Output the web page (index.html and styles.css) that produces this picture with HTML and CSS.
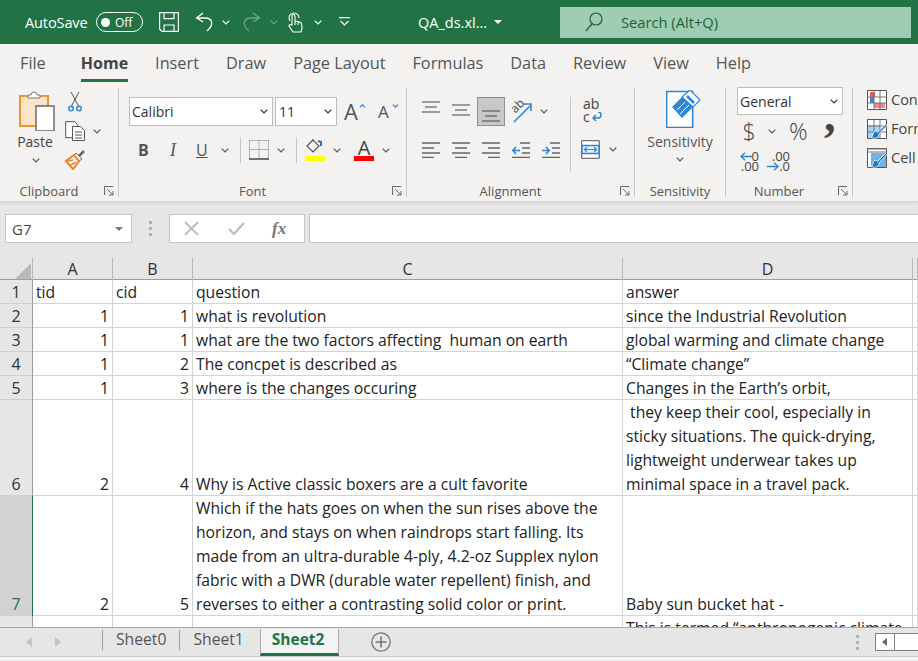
FILE: index.html
```html
<!DOCTYPE html>
<html lang="en">
<head>
    <meta charset="UTF-8">
    <title>QA_ds.xlsx - Excel</title>
    <link rel="stylesheet" href="styles.css">
</head>
<body>
    <svg class="sprite">
        <symbol id="chev" viewBox="0 0 8 5"><path d="M.7.7 4 4 7.3.7" fill="none" stroke="currentColor" stroke-width="1.2"/></symbol>
        <symbol id="launcher" viewBox="0 0 10 10"><path d="M.5 9V.5H9M3 3l6 6M9 5v4H5" fill="none" stroke="#666" stroke-width="1"/></symbol>
        <symbol id="lines" viewBox="0 0 18 12"><path d="M0 1h18M3 6h12M0 11h18" fill="none" stroke="#444" stroke-width="1.2"/></symbol>
        <symbol id="leftlines" viewBox="0 0 18 16"><path d="M0 1h18M0 6h12M0 11h18M0 15.500h12" fill="none" stroke="#666" stroke-width="1.4"/></symbol>
        <symbol id="midlines" viewBox="0 0 18 16"><path d="M0 1h18M3 6h12M0 11h18M3 15.500h12" fill="none" stroke="#666" stroke-width="1.4"/></symbol>
        <symbol id="rightlines" viewBox="0 0 18 16"><path d="M0 1h18M6 6h12M0 11h18M6 15.500h12" fill="none" stroke="#666" stroke-width="1.4"/></symbol>
        <symbol id="brush" viewBox="0 0 12 12"><path d="M11 1 5 7 3 6C1 7 2 10 0 11c4 1 6 0 6-3l1-1 5-5z" fill="#1e79c0" stroke="#fff" stroke-width=".6"/></symbol>
    </svg>

    <header class="titlebar">
        <span class="autosave">AutoSave</span>
        <span class="toggle"><i class="knob"></i>Off</span>
        <svg class="qa-save" width="20" height="20" viewBox="0 0 20 20" fill="none" stroke="#fff" stroke-width="1.200"><path d="M.6.6h18.800v18.800H3L.6 17zM5 .6v6h10v-6M5 19v-6h10v6"/></svg>
        <svg class="qa-undo" width="18" height="20" viewBox="0 0 18 20" fill="none" stroke="#fff" stroke-width="1.300"><path d="M8 1 1.500 6 8 10M2 6h8c8 0 9 7 2 13"/></svg>
        <svg class="qa-chev chev-small white"><use href="#chev"/></svg>
        <svg class="qa-redo" width="18" height="20" viewBox="0 0 18 20" fill="none" stroke="#6ba585" stroke-width="1.300"><path d="M10 1l6.500 5L10 10M16 6H8c-8 0-9 7-2 13"/></svg>
        <svg class="qa-chev chev-small dim"><use href="#chev"/></svg>
        <svg class="qa-touch" width="16" height="22" viewBox="0 0 16 22" fill="none" stroke="#fff" stroke-width="1.100"><path d="M3 10a6 6 0 0 1-1-3 5 5 0 0 1 10 0"/><path d="M5 14V5a1.500 1.500 0 0 1 3 0v5l5 1c2 1 2 4 2 6l-1 4H6l-4-6c0-1 1-2 3-1zM8 10v4M11 11v3"/></svg>
        <svg class="qa-chev2 chev-small white"><use href="#chev"/></svg>
        <svg class="qa-more" width="13" height="10" viewBox="0 0 13 10" fill="none" stroke="#fff" stroke-width="1.100"><path d="M1 .600h11M2.500 4 6.500 8l4-4"/></svg>
        <span class="filename">QA_ds.xl...</span>
        <svg class="caret" width="8" height="4" viewBox="0 0 8 4"><path d="M0 0h8L4 4z" fill="#fff"/></svg>
        <div class="search">
            <svg width="18" height="20" viewBox="0 0 18 20" fill="none" stroke="#1f5f3c" stroke-width="1.200"><circle cx="11" cy="7" r="6"/><path d="M7 12 .8 19"/></svg>
            <span>Search (Alt+Q)</span>
        </div>
    </header>

    <nav class="tabs">
        <a class="tab-file">File</a>
        <a class="tab-active">Home</a>
        <a>Insert</a>
        <a>Draw</a>
        <a>Page Layout</a>
        <a>Formulas</a>
        <a>Data</a>
        <a>Review</a>
        <a>View</a>
        <a>Help</a>
    </nav>

    <section class="ribbon">
        <div class="group clipboard">
            <div class="paste">
                <svg width="36" height="40" viewBox="0 0 36 40">
                    <path d="M1 5h28v30H1z" fill="#fbe6c8" stroke="#e8963a" stroke-width="2"/>
                    <path d="M9 7V4h3a3 3 0 0 1 6 0h3v3z" fill="#fff" stroke="#777"/>
                    <path d="M17 15h18v25H17z" fill="#fff" stroke="#666" stroke-width="1.400"/>
                </svg>
                <span>Paste</span>
                <svg class="chev-small"><use href="#chev"/></svg>
            </div>
            <div class="clip-tools">
                <svg width="14" height="20" viewBox="0 0 14 20" fill="none"><path d="M3.500 14 11 0M10.500 14 3 0" stroke="#555"/><circle cx="3" cy="16.500" r="2.300" stroke="#2b88d8" stroke-width="1.500"/><circle cx="11" cy="16.500" r="2.300" stroke="#2b88d8" stroke-width="1.500"/></svg>
                <div class="copy-row">
                    <svg width="20" height="20" viewBox="0 0 20 20" fill="#fff" stroke="#555"><path d="M.7.700h9l3 3v13H.7z"/><path d="M7.500 5.500h8l4 4v10H7.500zM10 11h7M10 14h7M10 17h7"/></svg>
                    <svg class="chev-small"><use href="#chev"/></svg>
                </div>
                <svg width="20" height="20" viewBox="0 0 20 20"><path d="M13 7 19 1" stroke="#666" stroke-width="2.500"/><path d="M11 3l6 6-3 2-5-5z" fill="#fff" stroke="#666"/><path d="M9 5 1 11l7 8 6-8z" fill="#fff" stroke="#e8862a" stroke-width="2"/><path d="M3 11l5-1M6 15l5-3" stroke="#e8862a" stroke-width="1.500"/></svg>
            </div>
            <span class="group-label">Clipboard</span>
            <svg class="launcher"><use href="#launcher"/></svg>
        </div>

        <div class="group font">
            <div class="font-row first">
                <div class="combo font-name">Calibri<svg class="chev-small dark"><use href="#chev"/></svg></div>
                <div class="combo font-size">11<svg class="chev-small dark"><use href="#chev"/></svg></div>
                <span class="grow-a big">A<svg width="7" height="4" viewBox="0 0 8 5"><path d="M.7 4.300 4 1l3.300 3.300" fill="none" stroke="#2b88d8" stroke-width="1.400"/></svg></span>
                <span class="grow-a small">A<svg width="7" height="4" viewBox="0 0 8 5"><path d="M.7.700 4 4 7.300.7" fill="none" stroke="#2b88d8" stroke-width="1.400"/></svg></span>
            </div>
            <div class="font-row second">
                <b class="fmt bold">B</b>
                <i class="fmt italic">I</i>
                <span class="fmt under">U</span>
                <svg class="chev-small"><use href="#chev"/></svg>
                <span class="vsep"></span>
                <svg class="borders" width="20" height="20" viewBox="0 0 20 20" fill="none"><path d="M.5.500h19M.5.500v18M19.500.500v18M.5 9.500h19M10 .5v18" stroke="#777" stroke-dasharray="1 1"/><path d="M0 19h20" stroke="#444" stroke-width="1.500"/></svg>
                <svg class="chev-small"><use href="#chev"/></svg>
                <span class="vsep"></span>
                <span class="swatch-icon">
                    <svg width="20" height="14" viewBox="0 0 20 14" fill="none"><path d="M8 1 2 7l6 6 6-6zM8 1V0" stroke="#555" stroke-width="1.200"/><path d="M13 2l3 1v4" stroke="#1e79c0" stroke-width="2"/></svg>
                    <i class="swatch yellow"></i>
                </span>
                <svg class="chev-small"><use href="#chev"/></svg>
                <span class="swatch-icon text-a">A<i class="swatch red"></i></span>
                <svg class="chev-small"><use href="#chev"/></svg>
            </div>
            <span class="group-label">Font</span>
            <svg class="launcher"><use href="#launcher"/></svg>
        </div>

        <div class="group alignment">
            <div class="align-left">
                <div class="align-row first">
                    <span class="cell-btn"><svg class="va-top" width="18" height="12"><use href="#lines"/></svg></span>
                    <span class="cell-btn"><svg class="va-mid" width="18" height="12"><use href="#lines"/></svg></span>
                    <span class="cell-btn pressed"><svg class="va-bottom" width="18" height="12"><use href="#lines"/></svg></span>
                    <span class="cell-btn orient">
                        <svg width="22" height="22" viewBox="0 0 22 22" fill="none"><path d="M4 21 20 5M14 3h7v7" stroke="#2b88d8" stroke-width="1.600"/></svg>
                        <em>ab</em>
                    </span>
                    <svg class="chev-small"><use href="#chev"/></svg>
                </div>
                <div class="align-row second">
                    <span class="cell-btn"><svg width="18" height="16"><use href="#leftlines"/></svg></span>
                    <span class="cell-btn"><svg width="18" height="16"><use href="#midlines"/></svg></span>
                    <span class="cell-btn"><svg width="18" height="16"><use href="#rightlines"/></svg></span>
                    <span class="cell-btn"><svg width="18" height="16" viewBox="0 0 18 16" fill="none"><path d="M8 1h10M10 6h8M10 11h8M0 15.500h18" stroke="#666" stroke-width="1.400"/><path d="M8 8.500H1M4 5 .8 8.500 4 12" stroke="#2b88d8" stroke-width="1.600"/></svg></span>
                    <span class="cell-btn"><svg width="18" height="16" viewBox="0 0 18 16" fill="none"><path d="M8 1h10M10 6h8M10 11h8M0 15.500h18" stroke="#666" stroke-width="1.400"/><path d="M0 8.500h7M4 5l3.200 3.500L4 12" stroke="#2b88d8" stroke-width="1.600"/></svg></span>
                </div>
            </div>
            <div class="align-right">
                <div class="wrap-icon">ab<br>c<svg width="10" height="10" viewBox="0 0 10 10" fill="none"><path d="M6 0c4 0 4 6 0 6H1M4 3 1 6l3 3" stroke="#2b88d8" stroke-width="1.500"/></svg></div>
                <div class="merge-row">
                    <svg width="19" height="19" viewBox="0 0 19 19" fill="none"><path d="M.7.700h17.600v17.600H.7z" fill="#fff" stroke="#555"/><path d="M1 5.500h17v8H1z" fill="#e4f0fb" stroke="#2b88d8" stroke-width="1.500"/><path d="M4 9.500h11M6 7 3.500 9.500 6 12M13 7l2.500 2.500L13 12" stroke="#2b88d8" stroke-width="1.200"/></svg>
                    <svg class="chev-small"><use href="#chev"/></svg>
                </div>
            </div>
            <span class="group-label">Alignment</span>
            <svg class="launcher"><use href="#launcher"/></svg>
        </div>

        <div class="group sensitivity">
            <svg class="sens-icon" width="35" height="38" viewBox="0 0 35 38" fill="none">
                <path d="M.7 1.500h26v36H.7z" fill="#fff" stroke="#2b88d8" stroke-width="1.500"/>
                <path d="M6 17 16 7l11 10-11 11z" fill="#2b88d8"/>
                <path d="M11 20l8-8M14 24l9-9" stroke="#fff"/>
                <path d="M16 7l8-7 10 10-7 7z" fill="#fff" stroke="#2b88d8" stroke-width="1.200"/>
                <path d="M21 6l7 7" stroke="#2b88d8" stroke-width="2.500"/>
            </svg>
            <span class="sens-text">Sensitivity</span>
            <svg class="chev-small"><use href="#chev"/></svg>
            <span class="group-label centered">Sensitivity</span>
        </div>

        <div class="group number">
            <div class="combo number-format">General<svg class="chev-small dark"><use href="#chev"/></svg></div>
            <div class="number-row">
                <span class="sym dollar">$</span>
                <svg class="chev-small"><use href="#chev"/></svg>
                <span class="sym percent">%</span>
                <span class="sym comma">,</span>
            </div>
            <div class="number-row decimals">
                <span class="dec">
                    <span class="dec-line"><svg width="12" height="9" viewBox="0 0 12 9" fill="none"><path d="M12 4.500H1M5 .8 1 4.500 5 8.200" stroke="#2b88d8" stroke-width="1.300"/></svg>0</span>
                    <span class="dec-line">.00</span>
                </span>
                <span class="dec">
                    <span class="dec-line">.00</span>
                    <span class="dec-line"><svg width="12" height="9" viewBox="0 0 12 9" fill="none"><path d="M0 4.500h11M7 .8l4 3.700L7 8.200" stroke="#2b88d8" stroke-width="1.300"/></svg>.0</span>
                </span>
            </div>
            <span class="group-label">Number</span>
            <svg class="launcher"><use href="#launcher"/></svg>
        </div>

        <div class="group styles">
            <div class="style-row">
                <svg width="20" height="20" viewBox="0 0 20 20">
                    <path d="M.5.500h19v19H.5z" fill="#fff" stroke="#555"/>
                    <path d="M3 2h5v6H3z" fill="#ee5a5a"/>
                    <path d="M7 13h11v5H7z" fill="#f08a8a"/>
                    <path d="M3 8h4v5H3z" fill="#2b88d8"/>
                    <path d="M1 7h18M1 13h18M7 1v18M13 1v18" stroke="#777"/>
                </svg>
                <span>Conditional Formatting</span>
            </div>
            <div class="style-row">
                <svg width="20" height="20" viewBox="0 0 20 20">
                    <path d="M.5.500h19v19H.5z" fill="#fff" stroke="#555"/>
                    <path d="M1 6h12v13H1z" fill="#a9d1f3"/>
                    <path d="M1 7h18M1 13h18M7 1v18M13 1v18" stroke="#777"/>
                    <svg x="4" y="4" width="16" height="16"><use href="#brush"/></svg>
                </svg>
                <span>Format as Table</span>
            </div>
            <div class="style-row">
                <svg width="20" height="20" viewBox="0 0 20 20">
                    <path d="M.5.500h19v19H.5z" fill="#fff" stroke="#555"/>
                    <path d="M1 1h18M1 4h18" stroke="#777"/>
                    <path d="M4 5h15v14H4z" fill="#6fb2ea"/>
                    <svg x="4" y="4" width="16" height="16"><use href="#brush"/></svg>
                </svg>
                <span>Cell Styles</span>
            </div>
        </div>
    </section>

    <div class="ribbon-shadow"></div>

    <section class="formula-band">
        <div class="namebox">G7<svg width="8" height="4" viewBox="0 0 8 4"><path d="M0 0h8L4 4z" fill="#777"/></svg></div>
        <span class="grip"><i></i><i></i><i></i></span>
        <div class="fx-buttons">
            <svg width="15" height="15" viewBox="0 0 15 15"><path d="M1 1l13 13M14 1 1 14" stroke="#bcbcbc" stroke-width="1.800"/></svg>
            <svg width="17" height="14" viewBox="0 0 17 14" fill="none"><path d="M1 7l5 5L16 1" stroke="#bcbcbc" stroke-width="2.200"/></svg>
            <span class="fx">fx</span>
        </div>
        <div class="formula-input"></div>
    </section>

    <main class="sheet">
        <table>
            <colgroup>
                <col class="col-head"><col class="col-a"><col class="col-b"><col class="col-c"><col class="col-d"><col>
            </colgroup>
            <thead>
                <tr>
                    <th class="corner"><svg width="16" height="16" viewBox="0 0 16 16"><path d="M16 0v16H0z" fill="#b9b9b9"/></svg></th>
                    <th>A</th><th>B</th><th>C</th><th>D</th><th></th>
                </tr>
            </thead>
            <tbody>
                <tr><th>1</th><td>tid</td><td>cid</td><td>question</td><td>answer</td><td></td></tr>
                <tr><th>2</th><td class="num">1</td><td class="num">1</td><td>what is revolution</td><td>since the Industrial Revolution</td><td></td></tr>
                <tr><th>3</th><td class="num">1</td><td class="num">1</td><td>what are the two factors affecting  human on earth</td><td>global warming and climate change</td><td></td></tr>
                <tr><th>4</th><td class="num">1</td><td class="num">2</td><td>The concpet is described as</td><td>“Climate change”</td><td></td></tr>
                <tr><th>5</th><td class="num">1</td><td class="num">3</td><td>where is the changes occuring</td><td>Changes in the Earth’s orbit,</td><td></td></tr>
                <tr><th>6</th><td class="num">2</td><td class="num">4</td><td>Why is Active classic boxers are a cult favorite</td><td> they keep their cool, especially in sticky situations. The quick-drying, lightweight underwear takes up minimal space in a travel pack.</td><td></td></tr>
                <tr class="selected"><th>7</th><td class="num">2</td><td class="num">5</td><td>Which if the hats goes on when the sun rises above the horizon, and stays on when raindrops start falling. Its made from an ultra-durable 4-ply, 4.2-oz Supplex nylon fabric with a DWR (durable water repellent) finish, and reverses to either a contrasting solid color or print.</td><td>Baby sun bucket hat -</td><td></td></tr>
                <tr><th>8</th><td class="num"></td><td class="num"></td><td></td><td>This is termed “anthropogenic climate change”</td><td></td></tr>
            </tbody>
        </table>
    </main>

    <footer class="sheet-tabs">
        <svg class="nav-arrow first" width="6" height="10" viewBox="0 0 6 10"><path d="M6 0v10L0 5z" fill="#c4c4c4"/></svg>
        <svg class="nav-arrow" width="6" height="10" viewBox="0 0 6 10"><path d="M0 0v10l6-5z" fill="#c4c4c4"/></svg>
        <a class="sheet-tab divided">Sheet0</a>
        <a class="sheet-tab divided">Sheet1</a>
        <a class="sheet-tab current">Sheet2</a>
        <svg class="add-sheet" width="20" height="20" viewBox="0 0 20 20" fill="none" stroke="#777"><circle cx="10" cy="10" r="9.200" stroke-width="1.300"/><path d="M10 4.500v11M4.500 10h11" stroke-width="1.600"/></svg>
        <span class="grip tabs-grip"><i></i><i></i><i></i></span>
        <div class="hscroll"><span class="hscroll-btn"><svg width="5" height="8" viewBox="0 0 5 8"><path d="M5 0v8L0 4z" fill="#666"/></svg></span></div>
    </footer>
    <div class="statusbar"></div>
</body>
</html>
```

FILE: styles.css
```css
html, body {
    height: 100%;
}

body {
    margin: 0;
    display: flex;
    flex-direction: column;
    overflow: hidden;
    background: #f3f2f1;
    color: #444;
    font-family: 'Open Sans', 'Liberation Sans', sans-serif;
    font-size: 14px;
}

.sprite {
    display: none;
}

.chev-small {
    display: block;
    width: 8px;
    height: 5px;
    flex: none;
    color: #555;
}

.chev-small.white { color: #fff; }
.chev-small.dim { color: #6ba585; }
.chev-small.dark { color: #333; }

/* title bar */
.titlebar {
    height: 44px;
    flex: none;
    display: flex;
    align-items: center;
    background: #217346;
    color: #fff;
    padding-left: 25px;
    box-sizing: border-box;
}

.autosave {
    font-size: 14.5px;
    letter-spacing: -0.1px;
    width: 63px;
    white-space: nowrap;
}

.toggle {
    margin-left: 8px;
    width: 47px;
    height: 20px;
    box-sizing: border-box;
    border: 1px solid #fff;
    border-radius: 10px;
    display: flex;
    align-items: center;
    font-size: 12px;
    padding-left: 4px;
    gap: 5px;
}

.knob {
    width: 9px;
    height: 9px;
    border-radius: 50%;
    background: #fff;
}

.qa-save { margin-left: 16px; }
.qa-undo { margin-left: 16px; }
.qa-chev { margin-left: 9px; }
.qa-redo { margin-left: 13px; }
.qa-touch { margin-left: 9px; }
.qa-chev2 { margin-left: 11px; }
.qa-more { margin-left: 16px; }

.filename {
    margin-left: 67px;
    width: 76px;
    font-size: 14.5px;
    white-space: nowrap;
}

.caret {
    flex: none;
}

.search {
    margin-left: 58px;
    width: 351px;
    height: 31px;
    background: #9fcdb3;
    color: #1f5f3c;
    display: flex;
    align-items: center;
    padding-left: 25px;
    box-sizing: border-box;
    gap: 18px;
    font-size: 14.7px;
}

/* tabs */
.tabs {
    height: 41px;
    flex: none;
    display: flex;
    gap: 27px;
    padding: 0 0 0 20px;
    box-sizing: border-box;
    font-size: 16.300px;
    color: #555;
    line-height: 38px;
}

.tabs a {
    white-space: nowrap;
}

.tab-file {
    margin-right: 8px;
}

.tabs .tab-active {
    font-weight: 700;
    font-size: 16px;
    color: #444;
    height: 35px;
    border-bottom: 3px solid #217346;
}

/* ribbon */
.ribbon {
    height: 116px;
    flex: none;
    display: flex;
    padding: 3px 0 4px;
    box-sizing: border-box;
    overflow: hidden;
}

.group {
    position: relative;
    flex: none;
    box-sizing: border-box;
    border-right: 1px solid #c6c6c6;
}

.group-label {
    position: absolute;
    left: 0;
    right: 20px;
    bottom: 0;
    line-height: 12px;
    text-align: center;
    font-size: 13px;
    color: #555;
}

.group-label.centered {
    right: 0;
}

.launcher {
    position: absolute;
    right: 4px;
    bottom: 1px;
    width: 10px;
    height: 10px;
}

.clipboard {
    width: 119px;
    display: flex;
    padding-left: 19px;
}

.paste {
    width: 36px;
    display: flex;
    flex-direction: column;
    align-items: center;
    padding-top: 3px;
}

.paste span {
    font-size: 14px;
    line-height: 20px;
    margin: 1px 4px 0 0;
}

.paste .chev-small {
    margin: 6px 3px 0 0;
}

.clip-tools {
    margin-left: 10px;
    padding-top: 4px;
    display: flex;
    flex-direction: column;
    gap: 9px;
}

.clip-tools > svg:first-child {
    margin-left: 3px;
}

.copy-row {
    display: flex;
    align-items: center;
    gap: 8px;
}

.font {
    width: 288px;
    padding-left: 10px;
}

.font-row {
    display: flex;
    align-items: center;
}

.font-row.first {
    margin-top: 9px;
    height: 29px;
    gap: 2px;
}

.combo {
    box-sizing: border-box;
    height: 29px;
    background: #fff;
    border: 1px solid #bdbdbd;
    display: flex;
    align-items: center;
    justify-content: space-between;
    padding: 0 4px 0 2px;
    color: #333;
    font-size: 14px;
}

.font-name { width: 144px; }
.font-size { width: 62px; padding-left: 3px; }

.grow-a {
    position: relative;
    display: block;
    line-height: 29px;
    color: #555;
}

.grow-a.big {
    font-size: 22px;
    width: 25px;
    margin-left: 5px;
}

.grow-a.small {
    font-size: 17px;
    width: 24px;
    margin-left: 7px;
}

.grow-a svg {
    position: absolute;
    top: 7px;
    right: 3px;
}

.font-row.second {
    margin-top: 11px;
    height: 26px;
    padding-left: 9px;
}

.fmt {
    font-size: 16px;
    width: 25px;
    flex: none;
    color: #555;
}

.bold { width: 29px; }
.italic { font-family: 'Liberation Serif', serif; font-size: 18px; width: 29px; padding-left: 3px; box-sizing: border-box; }
.under { text-decoration: underline; }

.vsep {
    width: 1px;
    height: 26px;
    background: #c6c6c6;
    flex: none;
    margin: 0 7px 0 11px;
}

.borders { margin: 0 8px 0 1px; flex: none; }

.swatch-icon {
    position: relative;
    display: block;
    width: 20px;
    height: 22px;
    margin: 0 8px 0 1px;
    flex: none;
}

.swatch-icon svg {
    display: block;
}

.swatch {
    position: absolute;
    left: 0;
    bottom: 0;
    width: 20px;
    height: 5px;
}

.swatch.yellow { background: #ffff00; }
.swatch.red { background: #ff0000; }

.swatch-icon.text-a {
    margin-left: 13px;
    text-align: center;
    font-size: 20px;
    line-height: 18px;
}

.alignment {
    width: 228px;
    display: flex;
    padding-left: 9px;
}

.align-left {
    width: 155px;
    flex: none;
    border-right: 1px solid #c6c6c6;
    height: 75px;
    margin-top: 9px;
    box-sizing: border-box;
}

.align-row {
    display: flex;
    align-items: center;
    height: 29px;
}

.align-row.second {
    margin-top: 11px;
    height: 26px;
}

.cell-btn {
    width: 30px;
    height: 29px;
    flex: none;
    box-sizing: border-box;
    display: flex;
    align-items: center;
    justify-content: center;
    position: relative;
}

.cell-btn.pressed {
    width: 28px;
    margin: 0 1px;
    background: #c8c8c8;
    border: 1px solid #8f8f8f;
}

.va-top { margin-top: -9px; }
.va-mid { margin-top: -3px; }
.va-bottom { margin-top: 9px; }

.orient em {
    position: absolute;
    left: 4px;
    top: 0;
    font-style: normal;
    font-size: 12px;
    transform: rotate(-45deg);
}

.align-row .chev-small {
    margin-left: 4px;
}

.align-right {
    padding: 8px 0 0 10px;
}

.wrap-icon {
    position: relative;
    font-size: 14px;
    line-height: 13px;
    height: 31px;
    padding-top: 1px;
    box-sizing: border-box;
    margin-left: 2px;
}

.wrap-icon svg {
    margin-left: 2px;
}

.merge-row {
    margin-top: 13px;
    display: flex;
    align-items: center;
    gap: 9px;
}

.sensitivity {
    width: 91px;
    display: flex;
    flex-direction: column;
    align-items: center;
    padding-top: 2px;
}

.sens-icon {
    margin-left: 6px;
    flex: none;
}

.sens-text {
    font-size: 14px;
    line-height: 20px;
    margin-top: 4px;
    color: #555;
}

.sensitivity .chev-small {
    margin-top: 5px;
}

.number {
    width: 127px;
    padding-left: 11px;
}

.number-format {
    width: 106px;
    height: 28px;
    padding-left: 2px;
    margin-top: -1px;
}

.number-row {
    display: flex;
    align-items: center;
    height: 30px;
    margin-top: 1px;
    width: 106px;
}

.sym {
    color: #444;
    line-height: 30px;
    font-size: 23px;
    font-weight: 300;
    display: block;
}

.number-row .chev-small { margin-left: 7px; }
.dollar { width: 24px; text-align: center; }
.percent { width: 28px; margin-left: 13px; }
.comma { margin: -14px 0 0 7px; font-family: 'Liberation Serif', serif; font-size: 46px; font-weight: 700; line-height: 14px; height: 30px; }

.decimals {
    margin-top: 0;
    gap: 9px;
}

.dec {
    width: 22px;
    flex: none;
    display: flex;
    flex-direction: column;
    align-items: flex-end;
    font-size: 13px;
    line-height: 10px;
    color: #444;
}

.dec-line {
    display: flex;
    align-items: center;
    height: 10px;
}

.styles {
    flex: 1;
    min-width: 0;
    border: 0;
    padding-left: 14px;
    overflow: hidden;
    margin-top: -3px;
}

.style-row {
    display: flex;
    align-items: center;
    gap: 4px;
    height: 29px;
    white-space: nowrap;
    font-size: 14.500px;
    color: #444;
}

.style-row svg {
    flex: none;
}

.ribbon-shadow {
    height: 4px;
    flex: none;
    background: linear-gradient(#d4d4d4, #e6e6e6);
}

/* formula bar */
.formula-band {
    height: 53px;
    flex: none;
    display: flex;
    background: #e6e6e6;
    padding: 9px 0 15px 5px;
    box-sizing: border-box;
    align-items: stretch;
}

.namebox {
    width: 127px;
    background: #fff;
    border: 1px solid #c6c6c6;
    box-sizing: border-box;
    display: flex;
    align-items: center;
    justify-content: space-between;
    padding: 0 8px 0 6px;
    font-size: 15px;
    color: #444;
}

.grip {
    width: 4px;
    margin: 0 16px 0 17px;
    display: flex;
    flex-direction: column;
    justify-content: center;
    gap: 3px;
}

.grip i {
    width: 3px;
    height: 3px;
    background: #b0b0b0;
}

.fx-buttons {
    width: 136px;
    background: #fff;
    border: 1px solid #c6c6c6;
    box-sizing: border-box;
    display: flex;
    align-items: center;
    padding-left: 14px;
    gap: 29px;
}

.fx {
    font-family: 'Liberation Serif', serif;
    font-style: italic;
    font-weight: 700;
    font-size: 17px;
    color: #777;
    margin-left: -2px;
}

.formula-input {
    flex: 1;
    margin-left: 4px;
    background: #fff;
    border: 1px solid #c6c6c6;
    border-right: 0;
}

/* worksheet */
.sheet {
    flex: 1;
    min-height: 0;
    overflow: hidden;
    background: #fff;
}

table {
    table-layout: fixed;
    border-collapse: separate;
    border-spacing: 0;
    width: 918px;
    color: #222;
    line-height: 24px;
    font-size: 15.700px;
}

.col-head { width: 33px; }
.col-a, .col-b { width: 80px; }
.col-c { width: 430px; }
.col-d { width: 290px; }

th, td {
    box-sizing: border-box;
    padding: 0 3px;
    font-weight: 400;
    border-right: 1px solid #d4d4d4;
    box-shadow: inset 0 -1px 0 #d4d4d4;
    vertical-align: bottom;
    white-space: pre-wrap;
}

thead th {
    height: 22px;
    line-height: 21px;
    background: #e6e6e6;
    border-right-color: #b9b9b9;
    box-shadow: inset 0 -1px 0 #9e9e9e;
    font-size: 16px;
    color: #333;
    text-align: center;
}

.corner {
    padding: 0 1px 1px 0;
    text-align: right;
    line-height: 0;
}

tbody th {
    height: 24px;
    background: #e6e6e6;
    border-right-color: #9e9e9e;
    box-shadow: inset 0 -1px 0 #d0d0d0;
    font-size: 16px;
    color: #333;
    text-align: center;
}

.num {
    text-align: right;
    padding-right: 3px;
}

.selected th {
    background: #d2d2d2;
    color: #217346;
    border-right: 1px solid #217346;
}

/* sheet tabs */
.sheet-tabs {
    height: 29px;
    flex: none;
    display: flex;
    align-items: center;
    background: #e6e6e6;
    border-top: 1px solid #a8a8a8;
    box-sizing: border-box;
}

.nav-arrow.first {
    margin-left: 26px;
    margin-right: 23px;
}

.sheet-tab {
    font-size: 15.700px;
    color: #555;
    padding: 0 13px;
    height: 20px;
    line-height: 18px;
    margin-top: -4px;
    white-space: nowrap;
}

.sheet-tab.divided {
    border-left: 1px solid #9e9e9e;
}

.sheet-tab.divided:first-of-type {
    margin-left: 41px;
}

.sheet-tab.current {
    font-weight: 700;
    font-size: 15.500px;
    color: #217346;
    background: #f3f3f3;
    width: 79px;
    height: 27px;
    margin: 0 0 0 3px;
    padding: 0 0 0 11px;
    box-sizing: border-box;
    line-height: 21px;
    border: 1px solid #a8a8a8;
    border-top: 0;
    border-bottom: 3px solid #217346;
}

.add-sheet {
    margin-left: 32px;
    flex: none;
}

.tabs-grip {
    margin: 0 0 0 465px;
}

.hscroll {
    margin-left: 15px;
    flex: 1;
    height: 18px;
    background: #fff;
    border: 1px solid #808080;
    border-right: 0;
    box-sizing: border-box;
}

.hscroll-btn {
    display: flex;
    align-items: center;
    justify-content: center;
    width: 18px;
    height: 16px;
    border-right: 1px solid #808080;
}

.statusbar {
    height: 5px;
    flex: none;
    background: #f3f2f1;
    border-top: 1px solid #cfcdcb;
    box-sizing: border-box;
}
```
